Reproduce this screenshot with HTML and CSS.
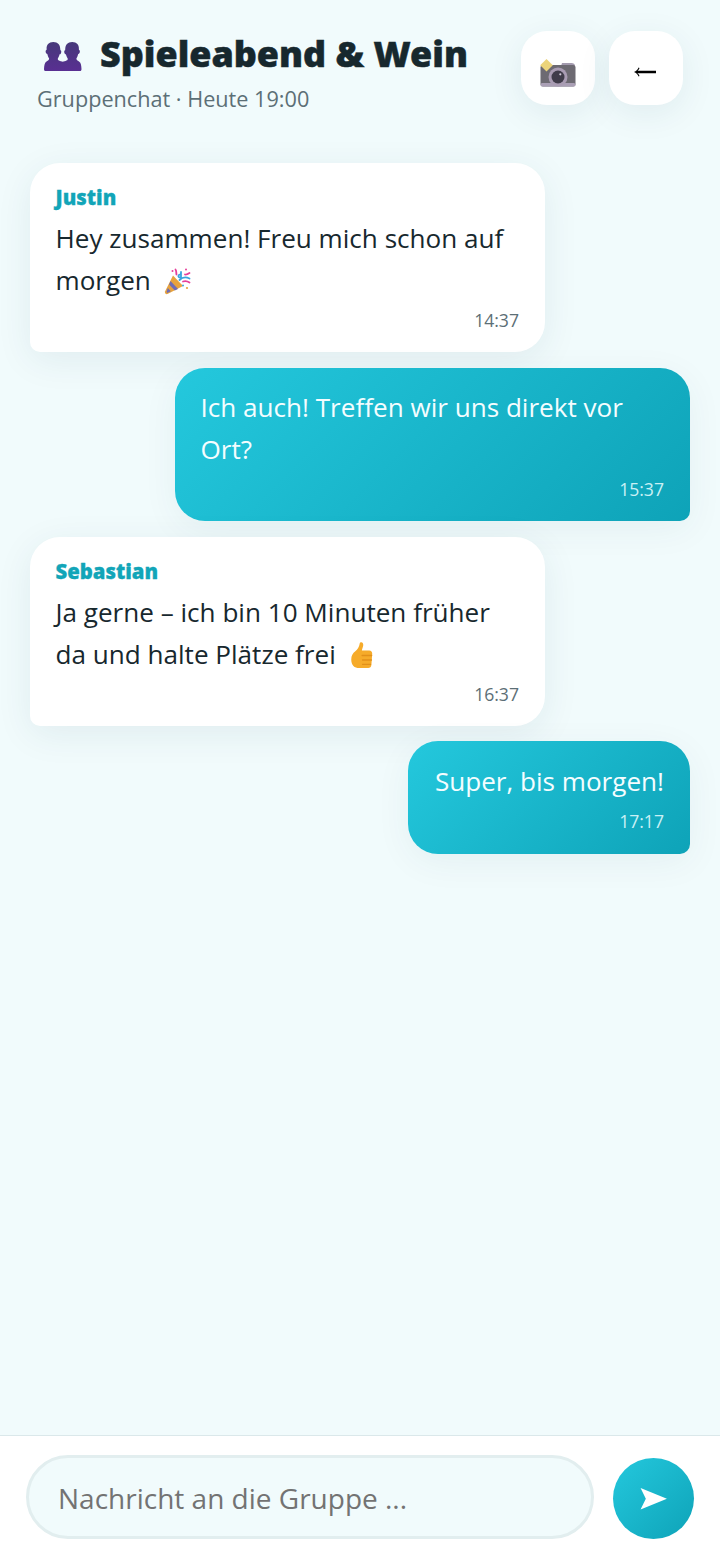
FILE: index.html
```html
<!DOCTYPE html>
<html lang="de">
<head>
<meta charset="utf-8">
<title>Spieleabend &amp; Wein</title>
<link rel="stylesheet" href="styles.css">
</head>
<body>
<div class="app">
  <header class="top">
    <div class="heading">
      <h1 class="title">
        <svg class="ico-people" viewBox="0 0 40 32" aria-hidden="true">
          <defs><linearGradient id="pg" x1="0" y1="0" x2="0" y2="1"><stop offset="0" stop-color="#46397a"/><stop offset="1" stop-color="#592f92"/></linearGradient></defs>
          <path fill="url(#pg)" d="M10 1c4.800 0 7.200 3 7.200 7.500l.1 1c1.100.1 1.200 1.900.5 3.300-.3.600-.8.900-1.300.9-.5 1.800-1 3.100-1.800 4V19c0 1.100 3.300 1.700 6.800 3V31H2.200C.9 31 .3 30 .4 28.800c.2-3.700.6-6.200 2.300-7.400 1.200-1 2.900-1.400 2.900-2.700v-1c-.8-.9-1.300-2.500-1.800-4.300-.5 0-1-.3-1.300-.9-.7-1.400-.6-3.200.5-3.300l.1-1C2.800 4 5.200 1 10 1z"/>
          <path fill="url(#pg)" transform="matrix(-1 0 0 1 39.500 0)" d="M10 1c4.800 0 7.200 3 7.200 7.500l.1 1c1.100.1 1.200 1.900.5 3.300-.3.600-.8.900-1.300.9-.5 1.800-1 3.100-1.800 4V19c0 1.100 3.300 1.700 6.800 3V31H2.200C.9 31 .3 30 .4 28.800c.2-3.700.6-6.200 2.300-7.400 1.200-1 2.900-1.400 2.900-2.700v-1c-.8-.9-1.300-2.500-1.800-4.300-.5 0-1-.3-1.300-.9-.7-1.400-.6-3.200.5-3.300l.1-1C2.800 4 5.200 1 10 1z"/>
        </svg>
        <span>Spieleabend &amp; Wein</span>
      </h1>
      <p class="sub">Gruppenchat · Heute 19:00</p>
    </div>
    <div class="actions">
      <button class="square" type="button" aria-label="Foto">
        <svg class="ico-camera" viewBox="0 0 36 30" aria-hidden="true">
          <path fill="#a39aae" d="M22 6h9.500C33.500 6 35 7 35 9H21z"/>
          <rect x="0.500" y="8" width="35" height="21.500" rx="2.500" fill="#6d6a72"/>
          <rect x="0.500" y="26" width="35" height="3.500" rx="1.700" fill="#aa9fb5"/>
          <circle cx="18" cy="20" r="9.500" fill="#a99cb3"/>
          <circle cx="18" cy="20" r="6.500" fill="#403c4a"/>
          <circle cx="20.300" cy="17.300" r="1.100" fill="#cfc8d8"/>
          <path fill="#ecd47a" d="M6.500 2l6.300 6.300-6.300 6.300L.2 8.300z"/>
        </svg>
      </button>
      <button class="square" type="button" aria-label="Zurück">
        <svg class="ico-arrow" viewBox="0 0 24 12" aria-hidden="true"><path d="M1 6c2.200-.7 3.700-2.300 4.600-4.400l.9.4C6 3.500 5.300 4.400 4.300 4.800H23v2.400H4.300c1 .4 1.700 1.300 2.200 2.800l-.9.400C4.700 8.300 3.200 6.700 1 6z"/></svg>
      </button>
    </div>
  </header>

  <main class="chat">
    <article class="msg in">
      <div class="who">Justin</div>
      <p class="text">Hey zusammen! Freu mich schon auf morgen <svg class="emoji" viewBox="0 0 28 28" aria-hidden="true">
        <path fill="#e8a33d" d="M9 8.500l10 10.500L3.500 27c-1.600.6-3-.8-2.500-2.500z"/>
        <path fill="#6f6db5" d="M6.500 14l7.500 8-3.200 1.600-5.700-6zM3.800 21l3 3.200-3.300 1.700-1-1z"/>
        <path fill="none" stroke="#38a4e0" stroke-width="1.800" stroke-linecap="round" d="M15.500 13c3-3 7-3 10-1.500M17 5v5c-1.500 1-3 0-2.500-1.500s2.500-1 2.500 0"/>
        <path fill="none" stroke="#e5409a" stroke-width="1.800" stroke-linecap="round" d="M19 14.500c3-1 5 0 6.500 1M21 7.500c1.500.5 3-.5 4.500-1.500M11.500 2.500c1.200 1.500.5 3 1 5"/>
        <circle cx="8.500" cy="4" r="1" fill="#e5409a"/><circle cx="22" cy="2.500" r="1" fill="#e5409a"/><circle cx="23" cy="21" r="1.100" fill="#e8a33d"/><circle cx="19" cy="18.500" r="1" fill="#38a4e0"/>
      </svg></p>
      <time class="stamp">14:37</time>
    </article>
    <article class="msg out">
      <p class="text">Ich auch! Treffen wir uns direkt vor Ort?</p>
      <time class="stamp">15:37</time>
    </article>
    <article class="msg in">
      <div class="who">Sebastian</div>
      <p class="text">Ja gerne – ich bin 10 Minuten früher da und halte Plätze frei <svg class="emoji" viewBox="0 0 28 28" aria-hidden="true">
        <g transform="scale(.9 1)">
          <path fill="#f6ab2a" d="M12.500 1.500c2.200-.8 3.700.8 3.300 3-.3 1.700-1.200 3.500-1.500 5h8.200c2.200 0 3.300 1.300 3.300 3.200l-.9 11c-.2 2.200-1.500 3.300-3.500 3.300H11.500C6 27 2.500 24.500 2.500 18.500c0-4 1.700-6.300 4.500-8.300 2.600-1.900 4.300-4.300 4.800-7.200.1-.7.300-1.300.7-1.500z"/>
          <path fill="none" stroke="#e2901a" stroke-width="1.300" stroke-linecap="round" d="M14.500 14.500h10.700M15 19h10M15 23.300h9"/>
        </g>
      </svg></p>
      <time class="stamp">16:37</time>
    </article>
    <article class="msg out brief">
      <p class="text">Super, bis morgen!</p>
      <time class="stamp">17:17</time>
    </article>
  </main>

  <footer class="composer">
    <input class="field" type="text" placeholder="Nachricht an die Gruppe ..." aria-label="Nachricht">
    <button class="send" type="button" aria-label="Senden">
      <svg class="ico-send" viewBox="0 0 30 24" aria-hidden="true"><path fill="#fff" d="M1.500 1L29 12.200 1.500 23.500 7 12.200z"/></svg>
    </button>
  </footer>
</div>
</body>
</html>
```
FILE: styles.css
```css
* { box-sizing: border-box; }
html, body { margin: 0; height: 100%; }
body {
  background: #f1fbfc;
  color: #17282e;
  font-family: "Open Sans", "Noto Sans", sans-serif;
}
.app { display: flex; flex-direction: column; height: 1558px; overflow: hidden; }

.top {
  display: flex;
  justify-content: space-between;
  align-items: flex-start;
  padding: 31px 37px 0 37px;
  height: 163px;
}
.title {
  display: flex;
  align-items: center;
  margin: 0;
  padding-left: 6px;
  font-family: "Noto Sans", sans-serif;
  font-weight: 900;
  font-size: 35.900px;
  line-height: 46px;
  color: #17282e;
  -webkit-text-stroke: .5px #17282e;
}
.ico-people { width: 40px; height: 31px; margin-right: 17px; margin-top: 4px; }
.sub { margin: 7px 0 0; font-size: 21.660px; line-height: 30px; color: #5c6f76; }
.actions { display: flex; gap: 14px; }
.square {
  width: 74px;
  height: 74px;
  border: 0;
  border-radius: 26px;
  background: #fff;
  box-shadow: 0 8px 34px rgba(20, 70, 85, .08);
  display: flex;
  align-items: center;
  justify-content: center;
  padding: 0;
}
.ico-arrow { width: 24px; height: 12px; margin: 8px 3px 0 0; }
.ico-camera { width: 36px; height: 30px; margin-top: 8px; }

.chat {
  flex: 1;
  display: flex;
  flex-direction: column;
  gap: 16px;
  padding: 0 30px 0 29.500px;
}
.msg {
  max-width: 515.500px;
  padding: 18px 26px 20px;
  font-size: 26.100px;
}
.in {
  align-self: flex-start;
  width: 515.500px;
  background: #fff;
  border-radius: 30px 30px 30px 10px;
  box-shadow: 0 8px 36px rgba(20, 70, 85, .08);
}
.out {
  align-self: flex-end;
  color: #f4fdff;
  background: linear-gradient(135deg, #24c8dd, #0ea3b8);
  border-radius: 30px 30px 10px 30px;
  box-shadow: 0 8px 36px rgba(20, 70, 85, .06);
}
.brief { margin-top: -1px; padding-top: 19px; padding-bottom: 21px; min-width: 282px; }
.who {
  font-family: "Noto Sans", sans-serif;
  font-weight: 900;
  font-size: 20.300px;
  line-height: 32px;
  color: #12a5b8;
  margin-bottom: 4px;
  -webkit-text-stroke: .3px #12a5b8;
}
.text { margin: 0; line-height: 42px; }
.brief .text { text-align: right; }
.emoji { width: 28px; height: 28px; vertical-align: -5px; margin-left: 6px; }
.stamp {
  display: block;
  text-align: right;
  font-size: 17.600px;
  line-height: 24px;
  margin-top: 7px;
  color: #5c6f76;
}
.out .stamp { color: #c9f0f5; }

.composer {
  display: flex;
  align-items: center;
  gap: 19px;
  height: 123px;
  padding: 19px 26px 19px 26px;
  background: #fff;
  border-top: 1px solid #dbe8ea;
}
.field {
  flex: 1;
  min-width: 0;
  height: 84px;
  border: 3px solid #e2eeef;
  border-radius: 42px;
  background: #f1fbfc;
  padding: 2px 29px 0;
  font-family: inherit;
  font-size: 28px;
  color: #17282e;
}
.field::placeholder { color: #737373; opacity: 1; }
.send {
  flex: none;
  width: 81px;
  height: 81px;
  margin-top: 3px;
  border: 0;
  border-radius: 50%;
  padding: 0;
  background: linear-gradient(135deg, #24c8dd, #0ea3b8);
  display: flex;
  align-items: center;
  justify-content: center;
}
.ico-send { width: 29px; height: 23px; }
```
